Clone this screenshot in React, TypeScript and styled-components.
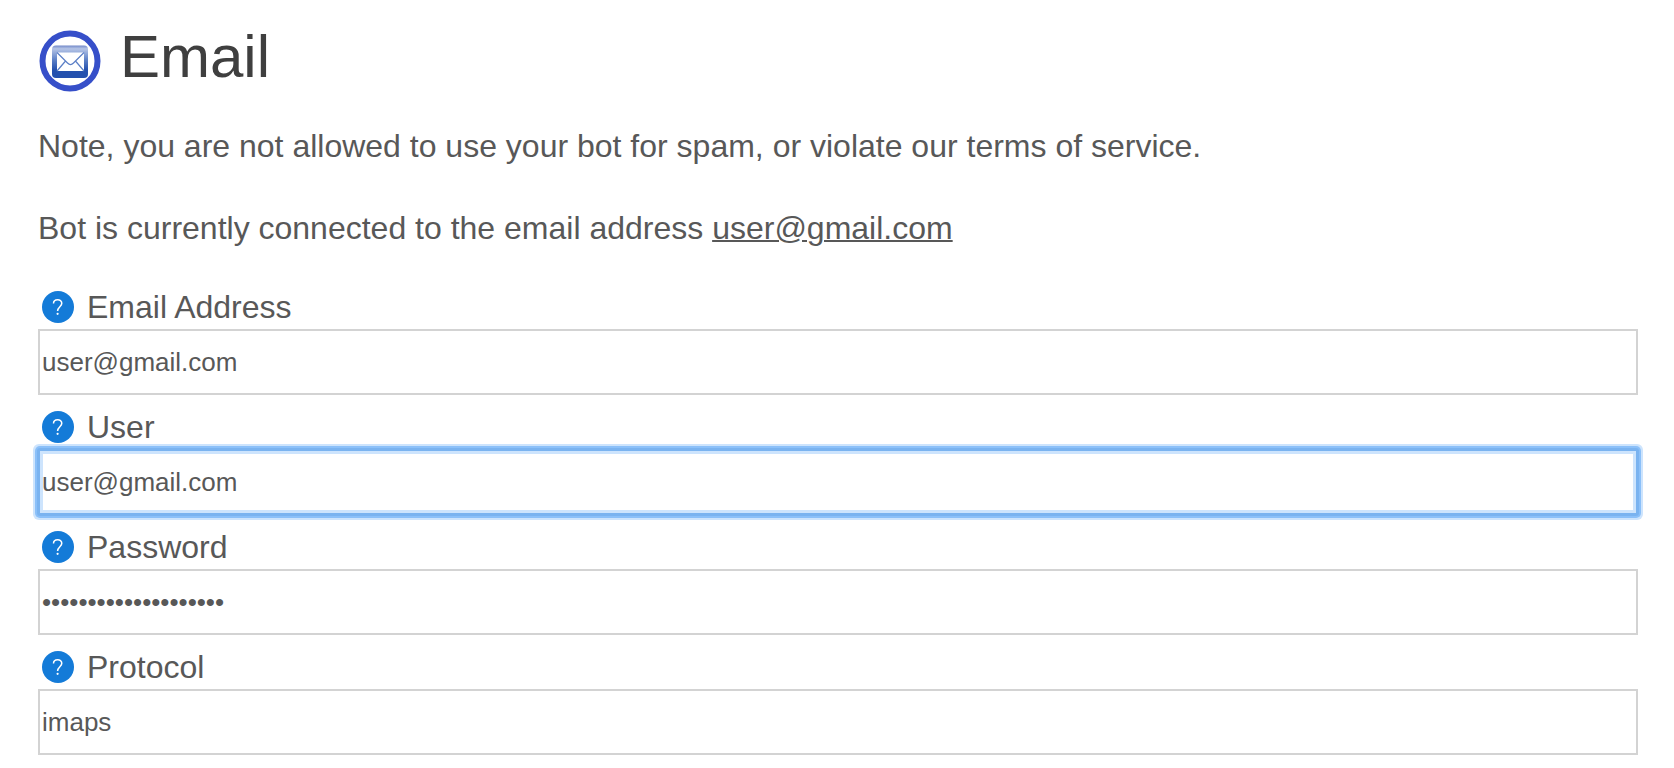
import React, { useId } from 'react';
import styled, { createGlobalStyle } from 'styled-components';

const GlobalStyle = createGlobalStyle`
  *, *::before, *::after { box-sizing: border-box; }
  body {
    margin: 0;
    background: #fff;
    color: #585858;
    font-family: "Liberation Sans", Arial, Helvetica, sans-serif;
    font-size: 32px;
    line-height: 36px;
  }
`;

const Page = styled.main`
  padding: 20px 36px 0 38px;
`;

const Header = styled.header`
  display: flex;
  align-items: center;
  gap: 18px;
`;

const Title = styled.h1`
  margin: 0;
  color: #3f3f3f;
  font-size: 60px;
  font-weight: 400;
  line-height: 74px;
`;

const Logo = styled.svg`
  flex: none;
  width: 64px;
  height: 64px;
  margin-top: 8px;
`;

const Note = styled.p`
  margin: 34px 0 0;
`;

const Status = styled.p`
  margin: 46px 0 0;
`;

const AddressLink = styled.a`
  color: inherit;
  text-decoration: underline;
  text-decoration-thickness: 2px;
`;

const Form = styled.form`
  margin-top: 29px;
`;

const Field = styled.div`
  display: flex;
  flex-direction: column;
`;

const LabelRow = styled.div`
  display: flex;
  align-items: center;
  gap: 13px;
  height: 54px;
  padding: 10px 0 0 4px;
`;

const HelpButton = styled.button`
  flex: none;
  width: 32px;
  height: 32px;
  padding: 0;
  border: 0;
  border-radius: 50%;
  background: #147bd8;
  cursor: pointer;

  svg { display: block; }
`;

const Input = styled.input`
  width: 100%;
  height: 66px;
  padding: 0 2px;
  border: 2px solid #d3d3d3;
  border-radius: 0;
  outline: none;
  background: #fff;
  color: #585858;
  font-family: inherit;
  font-size: 26px;

  &:focus {
    border-color: #7ab3f0;
    border-radius: 2px;
    box-shadow: 0 0 0 1px #7ab3f0, 0 0 0 3px #8bc0f9, 0 0 0 5px #cde4fd, inset 0 0 0 3px #cde4fd;
  }
`;

function EmailLogo() {
  return (
    <Logo viewBox="0 0 64 64" aria-hidden="true">
      <defs>
        <linearGradient id="tile" x1="0" y1="0" x2="0" y2="1">
          <stop offset="0" stopColor="#7288c8" />
          <stop offset="0.1" stopColor="#b5c4e6" />
          <stop offset="0.45" stopColor="#5b7fc6" />
          <stop offset="0.75" stopColor="#2450ae" />
          <stop offset="1" stopColor="#2450ae" />
        </linearGradient>
      </defs>
      <circle cx="32" cy="32" r="27.5" fill="#fff" stroke="#364fc9" strokeWidth="6" />
      <rect x="14" y="16.5" width="36" height="32.5" rx="4" fill="url(#tile)" />
      <rect x="19" y="23.5" width="27" height="18.5" fill="#fff" />
      <path d="M19 23.5 L29.5 34 Q32.5 37 35.5 34 L46 23.5 M19 42 L27.5 32 M46 42 L37.5 32" fill="none" stroke="#5b7fc6" strokeWidth="1.2" />
    </Logo>
  );
}

interface FormFieldProps {
  label: string;
  value: string;
  type?: string;
  focused?: boolean;
}

function FormField({ label, value, type = 'text', focused = false }: FormFieldProps) {
  const id = useId();
  return (
    <Field>
      <LabelRow>
        <HelpButton type="button" aria-label={`Help for ${label}`}>
          <svg width="32" height="32" viewBox="0 0 32 32" aria-hidden="true">
            <path d="M11.5 12.5C11.5 7.6 19.8 7.6 19.8 12.3C19.8 15.6 15.6 16 15.6 20" fill="none" stroke="#fff" strokeWidth="1.5" />
            <circle cx="15.6" cy="22.8" r="1.1" fill="#fff" />
          </svg>
        </HelpButton>
        <label htmlFor={id}>{label}</label>
      </LabelRow>
      <Input id={id} type={type} defaultValue={value} autoFocus={focused} autoComplete="off" spellCheck={false} />
    </Field>
  );
}

export default function App() {
  return (
    <>
      <GlobalStyle />
      <Page>
        <Header>
          <EmailLogo />
          <Title>Email</Title>
        </Header>
        <Note>Note, you are not allowed to use your bot for spam, or violate our terms of service.</Note>
        <Status>
          Bot is currently connected to the email address{' '}
          <AddressLink href="mailto:user@gmail.com">user@gmail.com</AddressLink>
        </Status>
        <Form>
          <FormField label="Email Address" value="user@gmail.com" />
          <FormField label="User" value="user@gmail.com" focused />
          <FormField label="Password" value="correcthorsebattery1" type="password" />
          <FormField label="Protocol" value="imaps" />
        </Form>
      </Page>
    </>
  );
}
